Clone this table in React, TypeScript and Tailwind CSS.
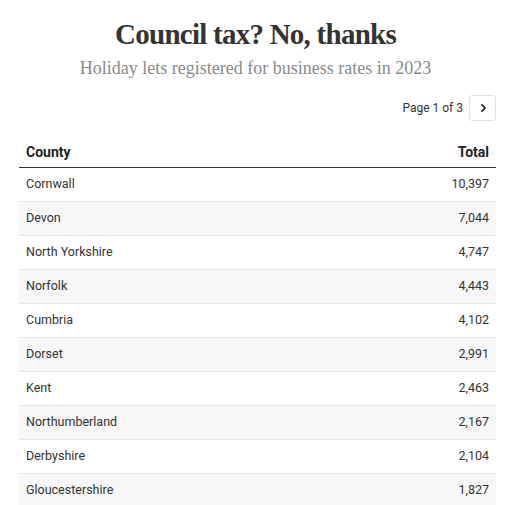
import React from "react";

const rows: [string, string][] = [
  ["Cornwall", "10,397"],
  ["Devon", "7,044"],
  ["North Yorkshire", "4,747"],
  ["Norfolk", "4,443"],
  ["Cumbria", "4,102"],
  ["Dorset", "2,991"],
  ["Kent", "2,463"],
  ["Northumberland", "2,167"],
  ["Derbyshire", "2,104"],
  ["Gloucestershire", "1,827"],
];

export default function App() {
  return (
    <div className="bg-white w-[522px] h-[505px] overflow-hidden">
      <div className="ml-[19px] w-[477px] pt-[17px]">
        <h1
          className="text-center text-[29px] leading-[34px] font-bold text-[#333333] tracking-[-0.75px] pr-[4px]"
          style={{ fontFamily: '"Liberation Serif", serif' }}
        >
          Council tax? No, thanks
        </h1>
        <p
          className="text-center text-[18px] leading-[22px] text-[#8a8a8a] mt-[6px] pr-[4px]"
          style={{ fontFamily: '"Liberation Serif", serif' }}
        >
          Holiday lets registered for business rates in 2023
        </p>
        <div
          className="flex justify-end items-center gap-[6px] mt-[16px]"
          style={{ fontFamily: "Roboto, sans-serif" }}
        >
          <span className="text-[12px] text-[#333333]">Page 1 of 3</span>
          <div className="w-[27px] h-[26px] border border-[#e3e3e3] rounded-[3px] flex items-center justify-center">
            <svg width="12" height="12" viewBox="0 0 12 12">
              <path d="M4.5 2.3 L8 6 L4.5 9.7" fill="none" stroke="#222" strokeWidth="1.7" />
            </svg>
          </div>
        </div>
        <div className="mt-[16px]" style={{ fontFamily: "Roboto, sans-serif" }}>
          <div className="flex justify-between items-end px-[7px] h-[31px] pb-[4px] border-b border-[#333333] text-[14px] font-bold text-[#222222]">
            <span>County</span>
            <span>Total</span>
          </div>
          {rows.map(([c, t], i) => (
            <div
              key={c}
              className={
                i % 2 === 1
                  ? "flex justify-between items-center px-[7px] h-[34px] border-b border-[#e6e6e6] bg-[#f7f7f7] text-[12.5px] text-[#333333]"
                  : "flex justify-between items-center px-[7px] h-[34px] border-b border-[#e6e6e6] bg-white text-[12.5px] text-[#333333]"
              }
            >
              <span>{c}</span>
              <span>{t}</span>
            </div>
          ))}
        </div>
      </div>
    </div>
  );
}
